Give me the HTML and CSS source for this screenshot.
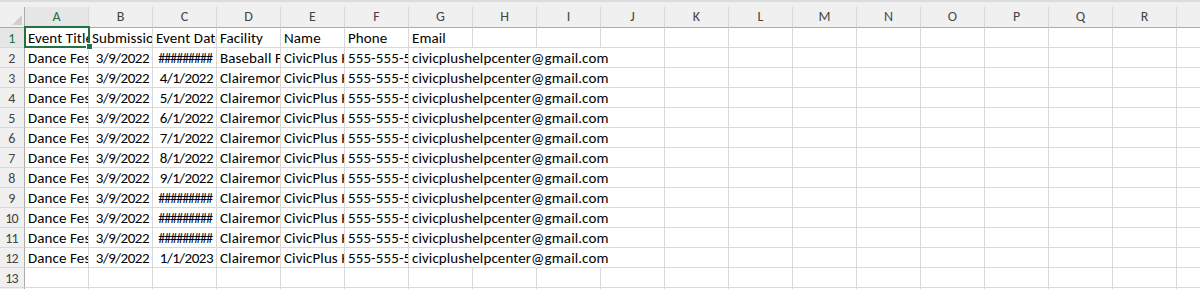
FILE: index.html
```html
<!DOCTYPE html>
<html lang="en">
<head>
    <meta charset="UTF-8">
    <title>Sheet1</title>
    <link rel="stylesheet" href="styles.css">
</head>
<body>
    <div class="topbar"></div>
    <table class="sheet">
        <colgroup>
            <col class="c-rh">
            <col><col><col><col><col><col><col><col><col><col>
            <col><col><col><col><col><col><col><col><col>
        </colgroup>
        <tr class="colhead">
            <th class="corner"><svg width="25" height="20" viewBox="0 0 25 20"><polygon points="22,8 22,18 12,18" fill="#d0d0d0"/></svg></th>
            <th class="on">A</th><th>B</th><th>C</th><th>D</th><th>E</th><th>F</th><th>G</th><th>H</th><th>I</th><th>J</th>
            <th>K</th><th>L</th><th>M</th><th>N</th><th>O</th><th>P</th><th>Q</th><th>R</th><th>S</th>
        </tr>
        <tr>
            <th class="rh on">1</th>
            <td>Event Title</td><td>Submission Date</td><td>Event Date</td><td>Facility</td><td>Name</td><td>Phone</td><td>Email</td>
            <td></td><td></td><td></td><td></td><td></td><td></td><td></td><td></td><td></td><td></td><td></td><td></td>
        </tr>
        <tr>
            <th class="rh">2</th>
            <td>Dance Festival</td><td class="num">3/9/2022</td><td class="num hash">#########</td><td>Baseball Field</td><td>CivicPlus Help Center</td><td>555-555-5555</td><td class="spill">civicplushelpcenter@gmail.com</td>
            <td class="gap"></td><td class="gap"></td><td></td><td></td><td></td><td></td><td></td><td></td><td></td><td></td><td></td><td></td>
        </tr>
        <tr>
            <th class="rh">3</th>
            <td>Dance Festival</td><td class="num">3/9/2022</td><td class="num">4/1/2022</td><td>Clairemore Park</td><td>CivicPlus Help Center</td><td>555-555-5555</td><td class="spill">civicplushelpcenter@gmail.com</td>
            <td class="gap"></td><td class="gap"></td><td></td><td></td><td></td><td></td><td></td><td></td><td></td><td></td><td></td><td></td>
        </tr>
        <tr>
            <th class="rh">4</th>
            <td>Dance Festival</td><td class="num">3/9/2022</td><td class="num">5/1/2022</td><td>Clairemore Park</td><td>CivicPlus Help Center</td><td>555-555-5555</td><td class="spill">civicplushelpcenter@gmail.com</td>
            <td class="gap"></td><td class="gap"></td><td></td><td></td><td></td><td></td><td></td><td></td><td></td><td></td><td></td><td></td>
        </tr>
        <tr>
            <th class="rh">5</th>
            <td>Dance Festival</td><td class="num">3/9/2022</td><td class="num">6/1/2022</td><td>Clairemore Park</td><td>CivicPlus Help Center</td><td>555-555-5555</td><td class="spill">civicplushelpcenter@gmail.com</td>
            <td class="gap"></td><td class="gap"></td><td></td><td></td><td></td><td></td><td></td><td></td><td></td><td></td><td></td><td></td>
        </tr>
        <tr>
            <th class="rh">6</th>
            <td>Dance Festival</td><td class="num">3/9/2022</td><td class="num">7/1/2022</td><td>Clairemore Park</td><td>CivicPlus Help Center</td><td>555-555-5555</td><td class="spill">civicplushelpcenter@gmail.com</td>
            <td class="gap"></td><td class="gap"></td><td></td><td></td><td></td><td></td><td></td><td></td><td></td><td></td><td></td><td></td>
        </tr>
        <tr>
            <th class="rh">7</th>
            <td>Dance Festival</td><td class="num">3/9/2022</td><td class="num">8/1/2022</td><td>Clairemore Park</td><td>CivicPlus Help Center</td><td>555-555-5555</td><td class="spill">civicplushelpcenter@gmail.com</td>
            <td class="gap"></td><td class="gap"></td><td></td><td></td><td></td><td></td><td></td><td></td><td></td><td></td><td></td><td></td>
        </tr>
        <tr>
            <th class="rh">8</th>
            <td>Dance Festival</td><td class="num">3/9/2022</td><td class="num">9/1/2022</td><td>Clairemore Park</td><td>CivicPlus Help Center</td><td>555-555-5555</td><td class="spill">civicplushelpcenter@gmail.com</td>
            <td class="gap"></td><td class="gap"></td><td></td><td></td><td></td><td></td><td></td><td></td><td></td><td></td><td></td><td></td>
        </tr>
        <tr>
            <th class="rh">9</th>
            <td>Dance Festival</td><td class="num">3/9/2022</td><td class="num hash">#########</td><td>Clairemore Park</td><td>CivicPlus Help Center</td><td>555-555-5555</td><td class="spill">civicplushelpcenter@gmail.com</td>
            <td class="gap"></td><td class="gap"></td><td></td><td></td><td></td><td></td><td></td><td></td><td></td><td></td><td></td><td></td>
        </tr>
        <tr>
            <th class="rh">10</th>
            <td>Dance Festival</td><td class="num">3/9/2022</td><td class="num hash">#########</td><td>Clairemore Park</td><td>CivicPlus Help Center</td><td>555-555-5555</td><td class="spill">civicplushelpcenter@gmail.com</td>
            <td class="gap"></td><td class="gap"></td><td></td><td></td><td></td><td></td><td></td><td></td><td></td><td></td><td></td><td></td>
        </tr>
        <tr>
            <th class="rh">11</th>
            <td>Dance Festival</td><td class="num">3/9/2022</td><td class="num hash">#########</td><td>Clairemore Park</td><td>CivicPlus Help Center</td><td>555-555-5555</td><td class="spill">civicplushelpcenter@gmail.com</td>
            <td class="gap"></td><td class="gap"></td><td></td><td></td><td></td><td></td><td></td><td></td><td></td><td></td><td></td><td></td>
        </tr>
        <tr>
            <th class="rh">12</th>
            <td>Dance Festival</td><td class="num">3/9/2022</td><td class="num">1/1/2023</td><td>Clairemore Park</td><td>CivicPlus Help Center</td><td>555-555-5555</td><td class="spill">civicplushelpcenter@gmail.com</td>
            <td class="gap"></td><td class="gap"></td><td></td><td></td><td></td><td></td><td></td><td></td><td></td><td></td><td></td><td></td>
        </tr>
        <tr>
            <th class="rh">13</th>
            <td></td><td></td><td></td><td></td><td></td><td></td><td></td><td></td><td></td><td></td>
            <td></td><td></td><td></td><td></td><td></td><td></td><td></td><td></td><td></td>
        </tr>
        <tr>
            <th class="rh">14</th>
            <td></td><td></td><td></td><td></td><td></td><td></td><td></td><td></td><td></td><td></td>
            <td></td><td></td><td></td><td></td><td></td><td></td><td></td><td></td><td></td>
        </tr>
    </table>

    <!-- active cell A1 -->
    <div class="selection"></div>
    <div class="fill-handle"></div>
</body>
</html>
```

FILE: styles.css
```css
* { box-sizing: border-box; }
html, body { margin: 0; }
body { width: 1200px; height: 289px; overflow: hidden; background: #fff; font-family: "Carlito", "Lato", "Liberation Sans", sans-serif; color: #000; position: relative; }

/* strip above the column letters */
.topbar { height: 7px; background: #f0f0f0; border-top: 2px solid #dcdcdc; }

/* grid */
.sheet { border-collapse: separate; border-spacing: 0; table-layout: fixed; width: 1241px; }
.sheet col { width: 64px; }
.sheet col.c-rh { width: 25px; }
.sheet tr { height: 20px; }
.sheet td, .sheet th { height: 20px; padding: 0 3px 1px; border-right: 1px solid #d9d9d9; border-bottom: 1px solid #d9d9d9; overflow: hidden; white-space: nowrap; font-size: 15px; line-height: 15px; vertical-align: bottom; text-align: left; font-weight: normal; }
.sheet td { letter-spacing: 0.1px; }
.sheet .num { text-align: right; letter-spacing: -0.5px; }
.sheet .hash { font-size: 14px; letter-spacing: -1px; padding-right: 4px; }
.sheet .spill { overflow: visible; border-right-color: transparent; }
.sheet .gap { border-right-color: transparent; }

/* headers */
.colhead th { background: #f0f0f0; color: #444; text-align: center; font-size: 14px; line-height: 17px; padding-bottom: 2px; border-bottom-color: #ababab; }
.sheet th.rh { background: #f0f0f0; color: #444; text-align: center; font-size: 14px; letter-spacing: -0.8px; border-right-color: #ababab; padding: 0 1px 1px 0; }
.sheet th.corner { padding: 0; border-right-color: #ababab; vertical-align: top; }
.corner svg { display: block; }
.sheet th.on { background: #e6e6e6; color: #217346; }

/* active cell */
.selection { position: absolute; left: 24px; top: 26px; width: 66px; height: 22px; border: 2px solid #217346; }
.fill-handle { position: absolute; left: 86px; top: 43px; width: 7px; height: 7px; background: #217346; border: 1px solid #fff; }
```
